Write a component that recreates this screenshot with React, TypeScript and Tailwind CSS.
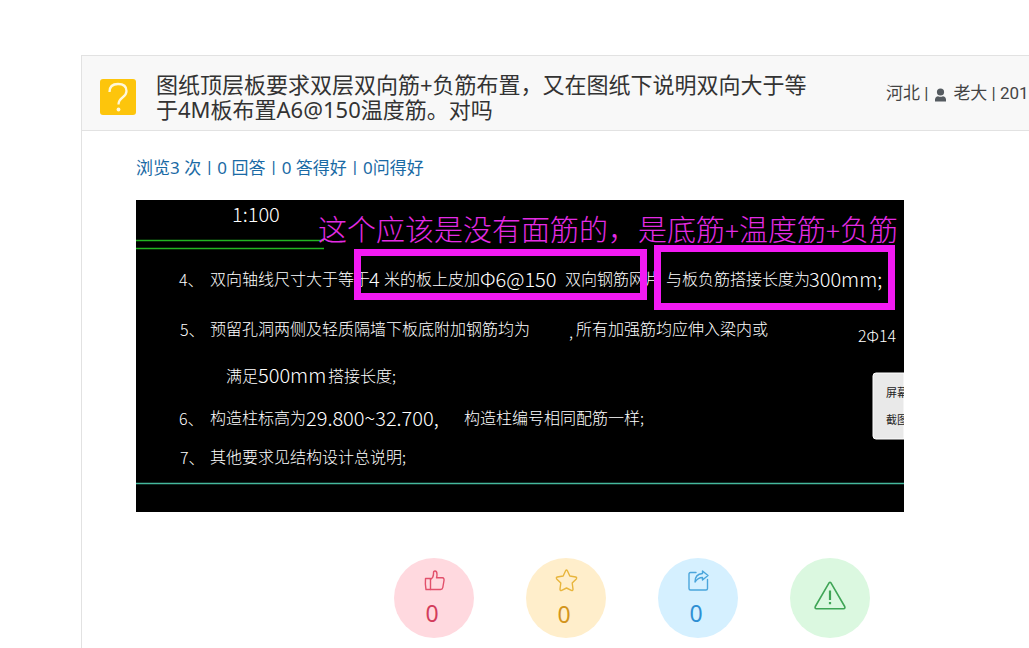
import React from "react";

const sans = "font-['Noto_Sans','Noto_Sans_CJK_SC',sans-serif]";
const meta = "font-[Roboto,'Noto_Sans_CJK_SC',sans-serif]";

type Note = { x: number; y: number; text: string; latin?: boolean };

const notes: Note[] = [
  { x: 96, y: 22, text: "1:100", latin: true },
  { x: 43, y: 86, text: "4、" },
  { x: 74, y: 85, text: "双向轴线尺寸大于等于" },
  { x: 233, y: 87, text: "4", latin: true },
  { x: 248, y: 85, text: "米的板上皮加" },
  { x: 344, y: 87, text: "Φ6@150", latin: true },
  { x: 429, y: 85, text: "双向钢筋网片" },
  { x: 530, y: 85, text: "与板负筋搭接长度为" },
  { x: 673, y: 87, text: "300mm;", latin: true },
  { x: 44, y: 136, text: "5、" },
  { x: 74, y: 135, text: "预留孔洞两侧及轻质隔墙下板底附加钢筋均为" },
  { x: 433, y: 138, text: "," },
  { x: 440, y: 135, text: "所有加强筋均应伸入梁内或" },
  { x: 722, y: 142, text: "2Φ14" },
  { x: 90, y: 182, text: "满足" },
  { x: 122, y: 183, text: "500mm", latin: true },
  { x: 192, y: 182, text: "搭接长度;" },
  { x: 43, y: 225, text: "6、" },
  { x: 74, y: 224, text: "构造柱标高为" },
  { x: 170, y: 226, text: "29.800~32.700,", latin: true },
  { x: 328, y: 224, text: "构造柱编号相同配筋一样;" },
  { x: 44, y: 264, text: "7、" },
  { x: 74, y: 263, text: "其他要求见结构设计总说明;" },
];

function Drawing() {
  return (
    <svg
      viewBox="0 0 768 312"
      className="block w-[768px] max-w-full bg-black font-['Noto_Sans_CJK_SC',sans-serif] font-light"
      role="img"
      aria-label="图纸说明"
    >
      <rect width="768" height="312" fill="#000" />
      <path d="M0 40.5H188M0 48.5H188" stroke="#22b422" strokeWidth="1.3" />
      <path d="M0 283.5H768" stroke="#45b89d" strokeWidth="1.3" />
      <g fill="#fff">
        {notes.map((n) => (
          <text
            key={`${n.x}-${n.y}`}
            x={n.x}
            y={n.y}
            className={n.latin ? "text-[20px]" : "text-[16px]"}
          >
            {n.text}
          </text>
        ))}
      </g>
      <g fill="none" stroke="#f31af3" strokeWidth="7">
        <rect x="221.500" y="52.500" width="286" height="44" />
        <rect x="521.500" y="48.500" width="234" height="58" />
      </g>
      <text x="182" y="41" fill="#e42be4" className="text-[29px]">
        这个应该是没有面筋的，
      </text>
      <text x="502" y="41" fill="#e42be4" className="text-[29px]">
        是底筋<tspan className="text-[26px]">+</tspan>温度筋
        <tspan className="text-[26px]">+</tspan>负筋
      </text>
      <path d="M768 173H740Q737 173 737 176V236Q737 239 740 239H768Z" fill="#e9e9e9" stroke="#fff" />
      <g fill="#222" className="font-normal text-[11px]">
        <text x="750" y="197">屏幕</text>
        <text x="750" y="224">截图</text>
      </g>
    </svg>
  );
}

function ThumbIcon() {
  return (
    <svg width="21" height="21" viewBox="0 0 21 21" fill="none" stroke="currentColor" strokeWidth="1.4" strokeLinejoin="round" strokeLinecap="round" aria-hidden="true">
      <path d="M1.500 8.500H6.500V19.500H2Q1 14 1.500 8.500Z" />
      <path d="M6.500 9.500Q9.500 7.500 9.500 4V3Q9.500 1 11 1Q13 1 13 4.500Q13 6.500 12.500 7.800H18.500Q20.300 8 20 10.500L18.800 17.500Q18.500 19.500 16.500 19.500H6.500" />
    </svg>
  );
}

function StarIcon() {
  return (
    <svg width="23" height="23" viewBox="0 0 23 23" fill="none" stroke="currentColor" strokeWidth="1.4" strokeLinejoin="round" aria-hidden="true">
      <path d="M10.600 1.800Q11.500 .3 12.400 1.800L14.800 7L20.700 8Q22.300 8.600 21.300 9.900L17.200 14L18 20.200Q18 22 16.300 21.400L11.500 19L6.700 21.400Q5 22 5 20.200L5.800 14L1.700 9.900Q.7 8.600 2.300 8L8.200 7Z" />
    </svg>
  );
}

function ShareIcon() {
  return (
    <svg width="21" height="21" viewBox="0 0 21 21" fill="none" stroke="currentColor" strokeWidth="1.4" strokeLinejoin="round" strokeLinecap="round" aria-hidden="true">
      <path d="M8 2.500H2.500Q1 2.500 1 4V18.500Q1 20 2.500 20H18Q19.500 20 19.500 18.500V9.500" />
      <path d="M14.500 1L20 5.500L14.500 10V7.500Q10 7.500 7 12Q7 4 14.500 3.500Z" />
    </svg>
  );
}

function WarningIcon() {
  return (
    <svg width="32" height="29" viewBox="0 0 32 29" fill="none" stroke="currentColor" strokeWidth="1.6" strokeLinejoin="round" aria-hidden="true">
      <path d="M15.200 1.700Q16 .7 16.800 1.700L30.700 25.500Q31.500 27.800 29.500 27.800H2.500Q.5 27.800 1.300 25.500Z" />
      <path d="M16 9.500V19M16 21V23.200" strokeWidth="2.200" />
    </svg>
  );
}

const stats = ["浏览3 次", "0 回答", "0 答得好", "0问得好"];

const actions = [
  { label: "赞", count: 0, icon: <ThumbIcon />, style: "bg-[#ffd9df] text-[#e2506b]", num: "text-[#d33d5c]" },
  { label: "收藏", count: 0, icon: <StarIcon />, style: "bg-[#ffeecb] text-[#e8b53c]", num: "text-[#d3951c]" },
  { label: "分享", count: 0, icon: <ShareIcon />, style: "bg-[#d5f0ff] text-[#4aa5dc]", num: "text-[#2f8fd3]" },
  { label: "举报", count: null, icon: <WarningIcon />, style: "bg-[#dbf8e0] pb-1.5 text-[#3fa556]", num: "" },
];

export default function App() {
  return (
    <div className={`min-h-screen overflow-hidden bg-white pt-[55px] pl-[81px] ${sans}`}>
      <main className="min-h-[593px] border-t border-l border-[#e2e2e2]">
        <header className="flex items-center border-b border-[#e2e2e2] bg-[#f8f8f8] pt-4 pb-1 pl-[18px]">
          <svg width="36" height="36" viewBox="0 0 36 36" className="mb-1 flex-none" aria-hidden="true">
            <rect width="36" height="36" rx="3" fill="#fdc50c" />
            <path d="M9.500 13Q9.500 5 18 5Q26.500 5 26.500 12Q26.500 15.500 22.500 18.500Q18.500 21.500 18.500 25.500" fill="none" stroke="#fff8dc" strokeWidth="2.300" />
            <circle cx="18.500" cy="30.500" r="1.900" fill="#fff8dc" />
          </svg>
          <h1 className="mb-1 ml-5 w-[664px] flex-none text-[22px] leading-[25px] text-[#333]">
            图纸顶层板要求双层双向筋+负筋布置，又在图纸下说明双向大于等于4M板布置A6@150温度筋。对吗
          </h1>
          <div className={`mb-3 ml-[66px] flex min-w-0 flex-1 items-center gap-1.5 overflow-hidden text-[17px] leading-6 whitespace-nowrap text-[#444] ${meta}`}>
            <span>河北 |</span>
            <svg width="13" height="14" viewBox="0 0 13 14" fill="#555b60" className="mt-1 flex-none" aria-hidden="true">
              <circle cx="6.500" cy="4" r="3.600" />
              <path d="M1 13.500Q.5 8.500 4 8.200Q6.500 9.500 9 8.200Q12.500 8.500 12 13.500Z" />
            </svg>
            <span>老大 | 201</span>
          </div>
        </header>

        <section className="pl-[54px]">
          <div className="flex gap-1.5 pt-6 pb-5 text-[17px] leading-[25px] text-[#1a6aa5]">
            {stats.map((s, i) => (
              <React.Fragment key={s}>
                {i > 0 && <span className={meta}>|</span>}
                <span>{s}</span>
              </React.Fragment>
            ))}
          </div>
          <Drawing />
          <div className="mt-[46px] flex gap-[52px] pl-[258px]">
            {actions.map((a) => (
              <button
                key={a.label}
                type="button"
                aria-label={a.label}
                className={`flex size-20 flex-none flex-col items-center justify-center rounded-full ${a.style}`}
              >
                <span className="flex">{a.icon}</span>
                {a.count !== null && (
                  <span className={`mt-2 mr-1 text-[23px] leading-7 ${a.num}`}>{a.count}</span>
                )}
              </button>
            ))}
          </div>
        </section>
      </main>
    </div>
  );
}
